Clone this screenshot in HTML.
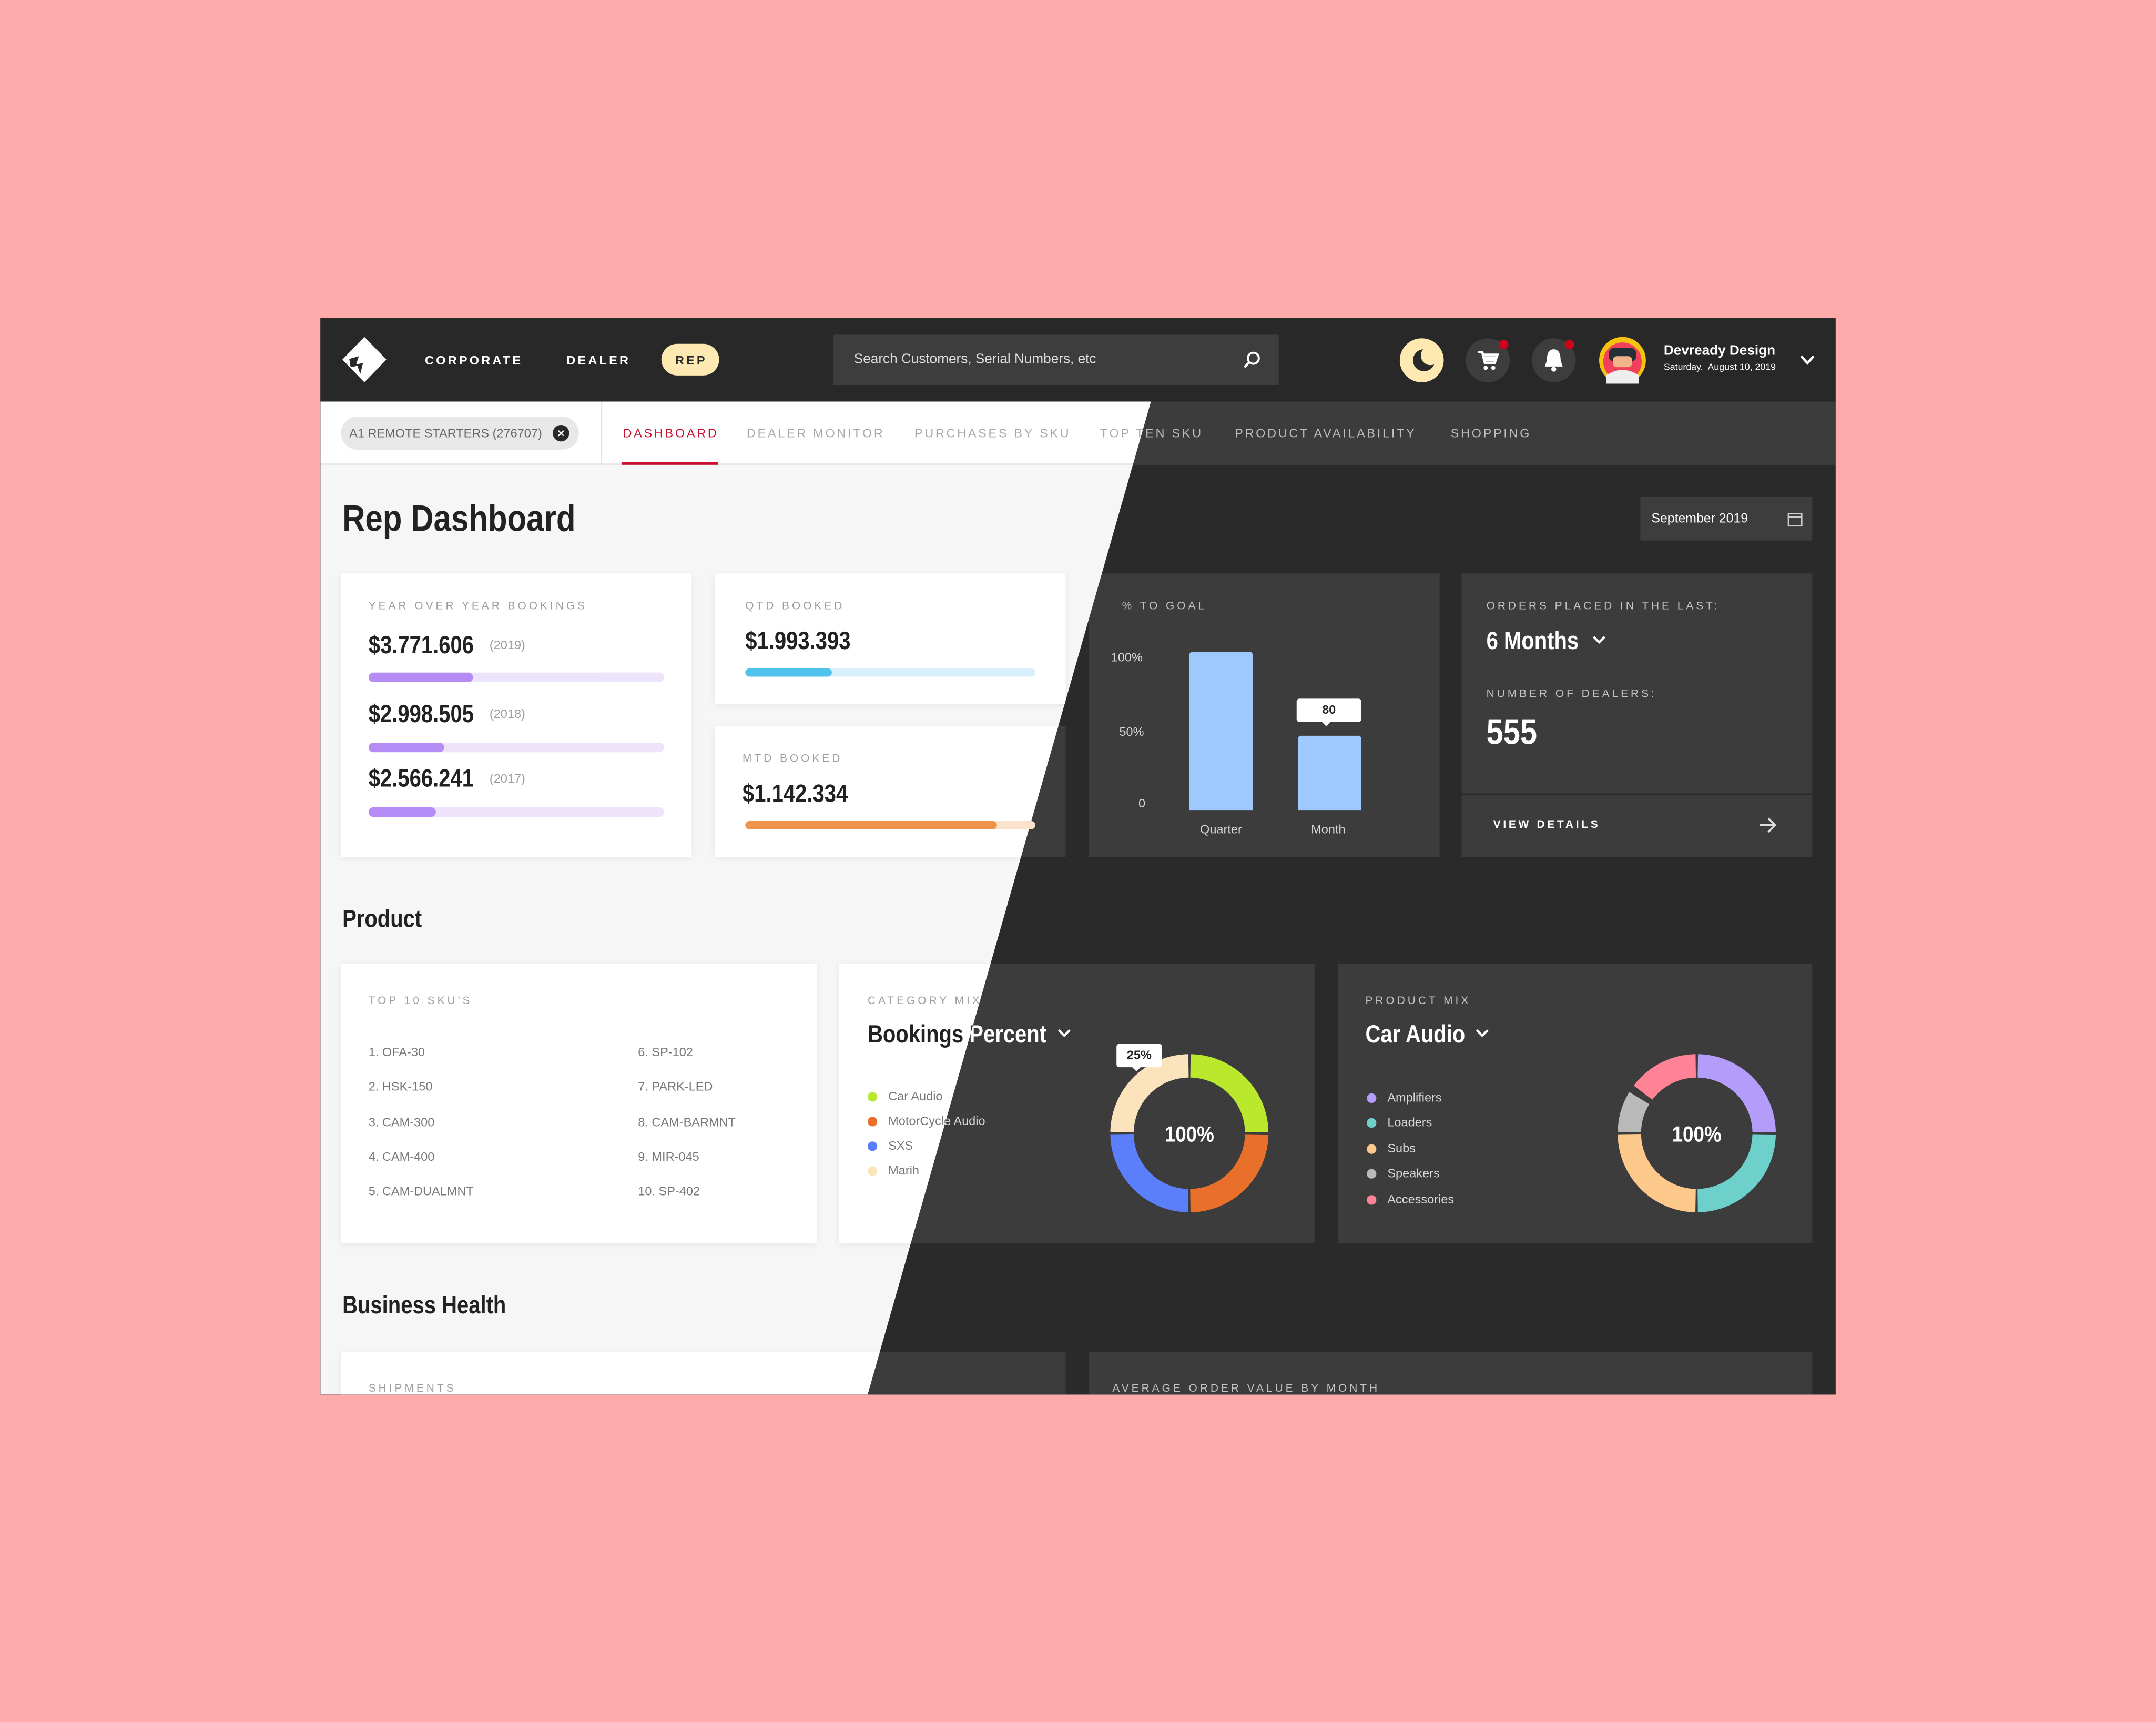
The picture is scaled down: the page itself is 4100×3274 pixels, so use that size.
<!DOCTYPE html>
<html><head><meta charset="utf-8">
<style>
html,body{margin:0;padding:0;width:4100px;height:3274px;overflow:hidden;background:#fdabab}
#root{position:absolute;left:0;top:0;width:1568px;height:1252px;transform:scale(2.61480);transform-origin:0 0;font-family:"Liberation Sans",sans-serif}
.app{position:absolute;left:233px;top:231px;width:1102px;height:783px;overflow:hidden;background:#2a2a2a}
.hdr{position:absolute;left:0;top:0;width:1102px;height:61px;background:#282828}
.t{position:absolute;line-height:1;white-space:nowrap}
.n{font-weight:bold;transform:scaleX(.85);transform-origin:0 50%}
.layer{position:absolute;left:0;top:61px;width:1102px;height:722px;overflow:hidden}
.L{clip-path:polygon(0 0,604px 0,398px 722px,0 722px);background:#f6f6f6}
.D{background:#2a2a2a}
.sub{position:absolute;left:0;top:0;width:1102px;height:46px}
.L .sub{background:#fff;border-bottom:1px solid #e4e4e4;height:45px}
.D .sub{background:#3c3c3c}
.tab{position:absolute;top:19px;font-size:9px;letter-spacing:1.4px;line-height:1}
.L .tab{color:#a8a8a8}.D .tab{color:#bdbdbd}
.card{position:absolute}
.L .card{background:#fff;box-shadow:0 1px 5px rgba(0,0,0,.07)}
.D .card{background:#3c3c3c}
.lbl{position:absolute;font-size:8px;letter-spacing:1.9px;line-height:1;white-space:nowrap}
.L .lbl{color:#9c9c9c}.D .lbl{color:#c4c4c4}
.L .h{color:#222}.D .h{color:#fff}
.L .tx{color:#777}.D .tx{color:#d8d8d8}
.L .yr{color:#999}.D .yr{color:#aaa}
.bar{position:absolute;height:7px;border-radius:4px;overflow:hidden}
.bar i{position:absolute;left:0;top:0;bottom:0;border-radius:4px}
.dot{position:absolute;width:7px;height:7px;border-radius:50%}
.s{font-size:9px}
</style></head><body>
<div id="root">
<div class="app">
 <div class="hdr">
  <svg class="t" style="left:16px;top:14px" width="32" height="33" viewBox="0 0 32 33"><polygon points="16,0 32,16.5 16,33 0,16.5" fill="#fff"/><path d="M5 16 L12 14 L10 20 L15 19 L13 27 L11 21 L6 22 Z" fill="#282828"/></svg>
  <div class="t" style="left:76px;top:27px;font-size:9px;letter-spacing:1.6px;color:#fff;font-weight:bold">CORPORATE</div>
  <div class="t" style="left:179px;top:27px;font-size:9px;letter-spacing:1.6px;color:#fff;font-weight:bold">DEALER</div>
  <div class="t" style="left:248px;top:19px;width:42px;height:23px;border-radius:12px;background:#ffe9b3"></div>
  <div class="t" style="left:258px;top:27px;font-size:9px;letter-spacing:1.6px;color:#282828;font-weight:bold">REP</div>
  <div class="t" style="left:373px;top:12px;width:324px;height:37px;background:#3d3d3d"></div>
  <div class="t" style="left:388px;top:26px;font-size:10px;color:#ddd">Search Customers, Serial Numbers, etc</div>
  <svg class="t" style="left:671px;top:24px" width="13" height="13" viewBox="0 0 13 13"><circle cx="7.5" cy="5.5" r="4" fill="none" stroke="#fff" stroke-width="1.5"/><line x1="4.5" y1="8.5" x2="1" y2="12" stroke="#fff" stroke-width="1.6"/></svg>
  <div class="t" style="left:785px;top:15px;width:32px;height:32px;border-radius:50%;background:#ffe9b3"></div>
  <svg class="t" style="left:792px;top:21px" width="20" height="20" viewBox="0 0 20 20"><path d="M10 2 A8 8 0 1 0 18 13 A7 7 0 0 1 10 2 Z" fill="#282828"/></svg>
  <div class="t" style="left:833px;top:15px;width:32px;height:32px;border-radius:50%;background:#3d3d3d"></div>
  <div class="t" style="left:857px;top:16px;width:7px;height:7px;border-radius:50%;background:#d0021b"></div>
  <svg class="t" style="left:841px;top:23px" width="16" height="16" viewBox="0 0 16 16"><path d="M1 2 H4 L6 10 H13 L15 4 H5" fill="none" stroke="#fff" stroke-width="1.8"/><rect x="5" y="5" width="9" height="4" fill="#fff"/><circle cx="6.5" cy="13.5" r="1.5" fill="#fff"/><circle cx="12" cy="13.5" r="1.5" fill="#fff"/></svg>
  <div class="t" style="left:881px;top:15px;width:32px;height:32px;border-radius:50%;background:#3d3d3d"></div>
  <div class="t" style="left:905px;top:16px;width:7px;height:7px;border-radius:50%;background:#d0021b"></div>
  <svg class="t" style="left:889px;top:22px" width="16" height="18" viewBox="0 0 16 18"><path d="M8 1 C4 1 3 5 3 9 L1.5 13.5 H14.5 L13 9 C13 5 12 1 8 1 Z" fill="#fff"/><circle cx="8" cy="15.5" r="1.8" fill="#fff"/></svg>
  <svg class="t" style="left:930px;top:14px" width="34" height="34" viewBox="0 0 34 34"><circle cx="17" cy="17" r="17" fill="#f3c30f"/><circle cx="17" cy="18" r="14" fill="#f0405a"/><rect x="7" y="8" width="20" height="10" rx="4" fill="#253036"/><rect x="10" y="14" width="14" height="8" rx="3" fill="#f0b38a"/><path d="M5 28 Q17 20 29 28 L29 34 L5 34Z" fill="#eee"/></svg>
  <div class="t" style="left:977px;top:20px;font-size:10px;color:#fff;font-weight:bold">Devready Design</div>
  <div class="t" style="left:977px;top:34px;font-size:6.8px;color:#fff">Saturday,&nbsp; August 10, 2019</div>
  <svg class="t" style="left:1076px;top:27px" width="11" height="8" viewBox="0 0 11 8"><path d="M1 1 L5.5 6 L10 1" fill="none" stroke="#fff" stroke-width="1.8"/></svg>
 </div>

 <!-- DARK LAYER -->
 <div class="layer D">
  <div class="sub"></div>
  <div class="t" style="left:15px;top:11px;width:173px;height:24px;border-radius:12px;background:#e8e8e8"></div>
  <div class="t" style="left:21px;top:19px;font-size:9px;color:#666">A1 REMOTE STARTERS (276707)</div>
  <div class="t" style="left:169px;top:17px;width:12px;height:12px;border-radius:50%;background:#282828;color:#fff;font-size:9px;text-align:center;line-height:12px;font-weight:bold">×</div>
  <div class="t" style="left:204px;top:0;width:1px;height:46px;background:#e4e4e4"></div>
  <div class="tab" style="left:220px;color:#c8102e">DASHBOARD</div>
  <div class="t" style="left:219px;top:44px;width:70px;height:2px;background:#c8102e"></div>
  <div class="tab" style="left:310px">DEALER MONITOR</div>
  <div class="tab" style="left:432px">PURCHASES BY SKU</div>
  <div class="tab" style="left:567px">TOP TEN SKU</div>
  <div class="tab" style="left:665px">PRODUCT AVAILABILITY</div>
  <div class="tab" style="left:822px">SHOPPING</div>

  <div class="t n h" style="left:16px;top:72px;font-size:27px">Rep Dashboard</div>
  <div class="t" style="left:960px;top:69px;width:125px;height:32px;background:#3d3d3d"></div>
  <div class="t" style="left:968px;top:81px;font-size:9.5px;color:#fff">September 2019</div>
  <svg class="t" style="left:1067px;top:80px" width="11" height="11" viewBox="0 0 11 11"><rect x="0.7" y="1.5" width="9.6" height="8.8" fill="none" stroke="#ccc" stroke-width="1.1"/><line x1="0.7" y1="4" x2="10.3" y2="4" stroke="#ccc"/></svg>

  <div class="card" style="left:15px;top:125px;width:255px;height:206px">
   <div class="lbl" style="left:20px;top:20px">YEAR OVER YEAR BOOKINGS</div>
   <div class="t n h" style="left:20px;top:43px;font-size:18px">$3.771.606</div><div class="t yr" style="left:108px;top:48px;font-size:9px">(2019)</div>
   <div class="bar" style="left:20px;top:72px;width:215px;background:#ede4fb"><i style="width:76px;background:#b58cf5"></i></div>
   <div class="t n h" style="left:20px;top:93px;font-size:18px">$2.998.505</div><div class="t yr" style="left:108px;top:98px;font-size:9px">(2018)</div>
   <div class="bar" style="left:20px;top:123px;width:215px;background:#ede4fb"><i style="width:55px;background:#b58cf5"></i></div>
   <div class="t n h" style="left:20px;top:140px;font-size:18px">$2.566.241</div><div class="t yr" style="left:108px;top:145px;font-size:9px">(2017)</div>
   <div class="bar" style="left:20px;top:170px;width:215px;background:#ede4fb"><i style="width:49px;background:#b58cf5"></i></div>
  </div>
  <div class="card" style="left:287px;top:125px;width:255px;height:95px">
   <div class="lbl" style="left:22px;top:20px">QTD BOOKED</div>
   <div class="t n h" style="left:22px;top:40px;font-size:18px">$1.993.393</div>
   <div class="bar" style="left:22px;top:69px;width:211px;height:6px;background:#d8f0fb"><i style="width:63px;background:#4fc3ee"></i></div>
  </div>
  <div class="card" style="left:287px;top:236px;width:255px;height:95px">
   <div class="lbl" style="left:20px;top:20px">MTD BOOKED</div>
   <div class="t n h" style="left:20px;top:40px;font-size:18px">$1.142.334</div>
   <div class="bar" style="left:22px;top:69px;width:211px;height:6px;background:#fbe2cc"><i style="width:183px;background:#f0934a"></i></div>
  </div>
  <div class="card" style="left:559px;top:125px;width:255px;height:206px">
   <div class="lbl" style="left:24px;top:20px">% TO GOAL</div>
   <div class="t tx" style="left:16px;top:57px;font-size:9px">100%</div>
   <div class="t tx" style="left:22px;top:111px;font-size:9px">50%</div>
   <div class="t tx" style="left:36px;top:163px;font-size:9px">0</div>
   <div class="t" style="left:73px;top:57px;width:46px;height:115px;background:#9ec9ff;border-radius:2px 2px 0 0"></div>
   <div class="t" style="left:152px;top:118px;width:46px;height:54px;background:#9ec9ff;border-radius:2px 2px 0 0"></div>
   <div class="t" style="left:151px;top:91px;width:47px;height:17px;background:#fff;border-radius:2px"></div>
   <div class="t" style="left:170px;top:105px;width:5px;height:5px;background:#fff;transform:rotate(45deg)"></div>
   <div class="t" style="left:151px;top:95px;width:47px;text-align:center;font-size:9px;font-weight:bold;color:#222">80</div>
   <div class="t tx" style="left:66px;top:182px;width:60px;text-align:center;font-size:9px">Quarter</div>
   <div class="t tx" style="left:144px;top:182px;width:60px;text-align:center;font-size:9px">Month</div>
  </div>
  <div class="card" style="left:830px;top:125px;width:255px;height:206px">
   <div class="lbl" style="left:18px;top:20px">ORDERS PLACED IN THE LAST:</div>
   <div class="t n h" style="left:18px;top:40px;font-size:18px">6 Months</div>
   <svg class="t" style="left:95px;top:45px" width="10" height="7" viewBox="0 0 10 7"><path d="M1 1 L5 5 L9 1" fill="none" stroke="#fff" stroke-width="1.6"/></svg>
   <div class="lbl" style="left:18px;top:84px">NUMBER OF DEALERS:</div>
   <div class="t n h" style="left:18px;top:102px;font-size:26px">555</div>
   <div class="t" style="left:0;top:160px;width:255px;height:1px;background:#2a2a2a"></div>
   <div class="t" style="left:23px;top:179px;font-size:8px;letter-spacing:1.8px;color:#fff;font-weight:bold">VIEW DETAILS</div>
   <svg class="t" style="left:216px;top:177px" width="14" height="12" viewBox="0 0 14 12"><path d="M1 6 H12 M7 1 L12 6 L7 11" fill="none" stroke="#ddd" stroke-width="1.4"/></svg>
  </div>

  <div class="t n h" style="left:16px;top:367px;font-size:18px">Product</div>
  <div class="card" style="left:15px;top:409px;width:346px;height:203px">
   <div class="lbl" style="left:20px;top:23px">TOP 10 SKU'S</div>
   <div class="t tx s" style="left:20px;top:60px">1. OFA-30</div>
   <div class="t tx s" style="left:20px;top:85px">2. HSK-150</div>
   <div class="t tx s" style="left:20px;top:111px">3. CAM-300</div>
   <div class="t tx s" style="left:20px;top:136px">4. CAM-400</div>
   <div class="t tx s" style="left:20px;top:161px">5. CAM-DUALMNT</div>
   <div class="t tx s" style="left:216px;top:60px">6. SP-102</div>
   <div class="t tx s" style="left:216px;top:85px">7. PARK-LED</div>
   <div class="t tx s" style="left:216px;top:111px">8. CAM-BARMNT</div>
   <div class="t tx s" style="left:216px;top:136px">9. MIR-045</div>
   <div class="t tx s" style="left:216px;top:161px">10. SP-402</div>
  </div>
  <div class="card" style="left:377px;top:409px;width:346px;height:203px">
   <div class="lbl" style="left:21px;top:23px">CATEGORY MIX</div>
   <div class="t n h" style="left:21px;top:42px;font-size:18px">Bookings Percent</div>
   <svg class="t" style="left:159px;top:47px" width="10" height="7" viewBox="0 0 10 7"><path d="M1 1 L5 5 L9 1" fill="none" stroke="#fff" stroke-width="1.6"/></svg>
   <div class="dot" style="left:21px;top:93px;background:#b9e82d"></div><div class="t tx s" style="left:36px;top:92px">Car Audio</div>
   <div class="dot" style="left:21px;top:111px;background:#e8702a"></div><div class="t tx s" style="left:36px;top:110px">MotorCycle Audio</div>
   <div class="dot" style="left:21px;top:129px;background:#5b7ffb"></div><div class="t tx s" style="left:36px;top:128px">SXS</div>
   <div class="dot" style="left:21px;top:147px;background:#fbe3bb"></div><div class="t tx s" style="left:36px;top:146px">Marih</div>
   <svg class="t" style="left:195px;top:63px" width="120" height="120" viewBox="0 0 120 120"><g transform="rotate(-90 60 60)" fill="none" stroke-width="17">
    <circle cx="60" cy="60" r="49" stroke="#b9e82d" stroke-dasharray="75.4 232.5" stroke-dashoffset="-0.8"/>
    <circle cx="60" cy="60" r="49" stroke="#e8702a" stroke-dasharray="75.4 232.5" stroke-dashoffset="-77.77"/>
    <circle cx="60" cy="60" r="49" stroke="#5b7ffb" stroke-dasharray="75.4 232.5" stroke-dashoffset="-154.74"/>
    <circle cx="60" cy="60" r="49" stroke="#fbe3bb" stroke-dasharray="75.4 232.5" stroke-dashoffset="-231.71"/></g>
    <text x="60" y="66" text-anchor="middle" font-family="Liberation Sans, sans-serif" font-weight="bold" font-size="16" fill="#fff" transform="translate(60 0) scale(.88 1) translate(-60 0)">100%</text></svg>
   <div class="t" style="left:202px;top:58px;width:33px;height:17px;background:#fff;border-radius:2px"></div>
   <div class="t" style="left:214px;top:72px;width:5px;height:5px;background:#fff;transform:rotate(45deg)"></div>
   <div class="t" style="left:202px;top:62px;width:33px;text-align:center;font-size:9px;font-weight:bold;color:#222">25%</div>
  </div>
  <div class="card" style="left:740px;top:409px;width:345px;height:203px">
   <div class="lbl" style="left:20px;top:23px">PRODUCT MIX</div>
   <div class="t n h" style="left:20px;top:42px;font-size:18px">Car Audio</div>
   <svg class="t" style="left:100px;top:47px" width="10" height="7" viewBox="0 0 10 7"><path d="M1 1 L5 5 L9 1" fill="none" stroke="#fff" stroke-width="1.6"/></svg>
   <div class="dot" style="left:21px;top:94px;background:#b49cfb"></div><div class="t tx s" style="left:36px;top:93px">Amplifiers</div>
   <div class="dot" style="left:21px;top:112px;background:#6dd0cb"></div><div class="t tx s" style="left:36px;top:111px">Loaders</div>
   <div class="dot" style="left:21px;top:131px;background:#fdc98a"></div><div class="t tx s" style="left:36px;top:130px">Subs</div>
   <div class="dot" style="left:21px;top:149px;background:#b9b9b9"></div><div class="t tx s" style="left:36px;top:148px">Speakers</div>
   <div class="dot" style="left:21px;top:168px;background:#ff8394"></div><div class="t tx s" style="left:36px;top:167px">Accessories</div>
   <svg class="t" style="left:201px;top:63px" width="120" height="120" viewBox="0 0 120 120"><g transform="rotate(-90 60 60)" fill="none" stroke-width="17">
    <circle cx="60" cy="60" r="49" stroke="#b49cfb" stroke-dasharray="75.4 232.5" stroke-dashoffset="-0.8"/>
    <circle cx="60" cy="60" r="49" stroke="#6dd0cb" stroke-dasharray="75.4 232.5" stroke-dashoffset="-77.77"/>
    <circle cx="60" cy="60" r="49" stroke="#fdc98a" stroke-dasharray="75.4 232.5" stroke-dashoffset="-154.74"/>
    <circle cx="60" cy="60" r="49" stroke="#b9b9b9" stroke-dasharray="26 281.9" stroke-dashoffset="-231.71"/>
    <circle cx="60" cy="60" r="49" stroke="#ff8394" stroke-dasharray="44.5 263.4" stroke-dashoffset="-262.5"/></g>
    <text x="60" y="66" text-anchor="middle" font-family="Liberation Sans, sans-serif" font-weight="bold" font-size="16" fill="#fff" transform="translate(60 0) scale(.88 1) translate(-60 0)">100%</text></svg>
  </div>

  <div class="t n h" style="left:16px;top:648px;font-size:18px">Business Health</div>
  <div class="card" style="left:15px;top:691px;width:527px;height:60px"><div class="lbl" style="left:20px;top:23px">SHIPMENTS</div></div>
  <div class="card" style="left:559px;top:691px;width:526px;height:60px"><div class="lbl" style="left:17px;top:23px">AVERAGE ORDER VALUE BY MONTH</div></div>
 </div>

 <!-- LIGHT LAYER -->
 <div class="layer L">
  <div class="sub"></div>
  <div class="t" style="left:15px;top:11px;width:173px;height:24px;border-radius:12px;background:#e8e8e8"></div>
  <div class="t" style="left:21px;top:19px;font-size:9px;color:#666">A1 REMOTE STARTERS (276707)</div>
  <div class="t" style="left:169px;top:17px;width:12px;height:12px;border-radius:50%;background:#282828;color:#fff;font-size:9px;text-align:center;line-height:12px;font-weight:bold">×</div>
  <div class="t" style="left:204px;top:0;width:1px;height:46px;background:#e4e4e4"></div>
  <div class="tab" style="left:220px;color:#c8102e">DASHBOARD</div>
  <div class="t" style="left:219px;top:44px;width:70px;height:2px;background:#c8102e"></div>
  <div class="tab" style="left:310px">DEALER MONITOR</div>
  <div class="tab" style="left:432px">PURCHASES BY SKU</div>
  <div class="tab" style="left:567px">TOP TEN SKU</div>

  <div class="t n h" style="left:16px;top:72px;font-size:27px">Rep Dashboard</div>

  <div class="card" style="left:15px;top:125px;width:255px;height:206px">
   <div class="lbl" style="left:20px;top:20px">YEAR OVER YEAR BOOKINGS</div>
   <div class="t n h" style="left:20px;top:43px;font-size:18px">$3.771.606</div><div class="t yr" style="left:108px;top:48px;font-size:9px">(2019)</div>
   <div class="bar" style="left:20px;top:72px;width:215px;background:#ede4fb"><i style="width:76px;background:#b58cf5"></i></div>
   <div class="t n h" style="left:20px;top:93px;font-size:18px">$2.998.505</div><div class="t yr" style="left:108px;top:98px;font-size:9px">(2018)</div>
   <div class="bar" style="left:20px;top:123px;width:215px;background:#ede4fb"><i style="width:55px;background:#b58cf5"></i></div>
   <div class="t n h" style="left:20px;top:140px;font-size:18px">$2.566.241</div><div class="t yr" style="left:108px;top:145px;font-size:9px">(2017)</div>
   <div class="bar" style="left:20px;top:170px;width:215px;background:#ede4fb"><i style="width:49px;background:#b58cf5"></i></div>
  </div>
  <div class="card" style="left:287px;top:125px;width:255px;height:95px">
   <div class="lbl" style="left:22px;top:20px">QTD BOOKED</div>
   <div class="t n h" style="left:22px;top:40px;font-size:18px">$1.993.393</div>
   <div class="bar" style="left:22px;top:69px;width:211px;height:6px;background:#d8f0fb"><i style="width:63px;background:#4fc3ee"></i></div>
  </div>
  <div class="card" style="left:287px;top:236px;width:255px;height:95px">
   <div class="lbl" style="left:20px;top:20px">MTD BOOKED</div>
   <div class="t n h" style="left:20px;top:40px;font-size:18px">$1.142.334</div>
   <div class="bar" style="left:22px;top:69px;width:211px;height:6px;background:#fbe2cc"><i style="width:183px;background:#f0934a"></i></div>
  </div>

  <div class="t n h" style="left:16px;top:367px;font-size:18px">Product</div>
  <div class="card" style="left:15px;top:409px;width:346px;height:203px">
   <div class="lbl" style="left:20px;top:23px">TOP 10 SKU'S</div>
   <div class="t tx s" style="left:20px;top:60px">1. OFA-30</div>
   <div class="t tx s" style="left:20px;top:85px">2. HSK-150</div>
   <div class="t tx s" style="left:20px;top:111px">3. CAM-300</div>
   <div class="t tx s" style="left:20px;top:136px">4. CAM-400</div>
   <div class="t tx s" style="left:20px;top:161px">5. CAM-DUALMNT</div>
   <div class="t tx s" style="left:216px;top:60px">6. SP-102</div>
   <div class="t tx s" style="left:216px;top:85px">7. PARK-LED</div>
   <div class="t tx s" style="left:216px;top:111px">8. CAM-BARMNT</div>
   <div class="t tx s" style="left:216px;top:136px">9. MIR-045</div>
   <div class="t tx s" style="left:216px;top:161px">10. SP-402</div>
  </div>
  <div class="card" style="left:377px;top:409px;width:346px;height:203px">
   <div class="lbl" style="left:21px;top:23px">CATEGORY MIX</div>
   <div class="t n h" style="left:21px;top:42px;font-size:18px">Bookings Percent</div>
   <div class="dot" style="left:21px;top:93px;background:#b9e82d"></div><div class="t tx s" style="left:36px;top:92px">Car Audio</div>
   <div class="dot" style="left:21px;top:111px;background:#e8702a"></div><div class="t tx s" style="left:36px;top:110px">MotorCycle Audio</div>
   <div class="dot" style="left:21px;top:129px;background:#5b7ffb"></div><div class="t tx s" style="left:36px;top:128px">SXS</div>
   <div class="dot" style="left:21px;top:147px;background:#fbe3bb"></div><div class="t tx s" style="left:36px;top:146px">Marih</div>
  </div>

  <div class="t n h" style="left:16px;top:648px;font-size:18px">Business Health</div>
  <div class="card" style="left:15px;top:691px;width:527px;height:60px"><div class="lbl" style="left:20px;top:23px">SHIPMENTS</div></div>
 </div>
</div>
</div>
</body></html>
